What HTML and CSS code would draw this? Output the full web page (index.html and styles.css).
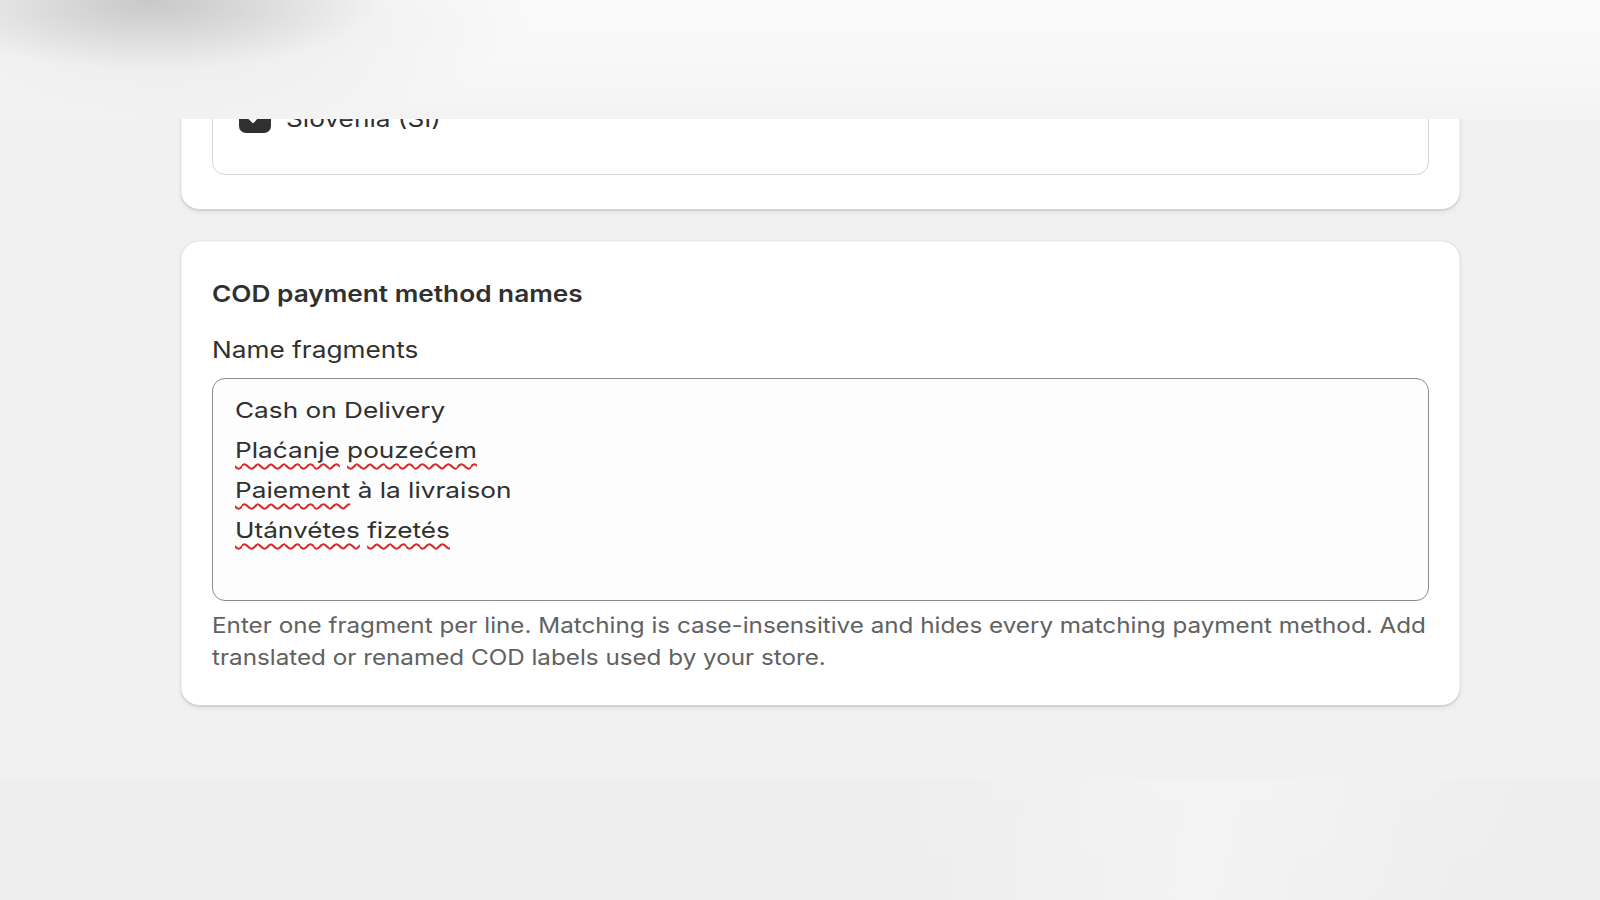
FILE: index.html
```html
<!DOCTYPE html>
<html lang="en">

<head>
    <meta charset="utf-8">
    <title>COD payment settings</title>

    <link rel="stylesheet" href="styles.css">

</head>

<body>
    <div class="topbar"></div>

    <main class="page">
        <section class="card card-countries">
            <div class="choice-list">
                <label class="choice">
                    <span class="checkbox"><svg viewBox="0 0 20 20"><path d="M5.5 10.5l3 3 6-7" /></svg></span>
                    <span class="wide">Slovakia (SK)</span>
                </label>
                <label class="choice">
                    <span class="checkbox"><svg viewBox="0 0 20 20"><path d="M5.5 10.5l3 3 6-7" /></svg></span>
                    <span class="wide">Slovenia (SI)</span>
                </label>
            </div>
        </section>

        <section class="card">
            <h2 class="card-title"><span class="wide">COD payment method names</span></h2>

            <div class="label"><span class="wide">Name fragments</span></div>
            <div class="textarea" role="textbox" aria-multiline="true">
                <div class="line">Cash on Delivery</div>
                <div class="line"><span class="typo">Plaćanje</span> <span class="typo">pouzećem</span></div>
                <div class="line"><span class="typo">Paiement</span> à la livraison</div>
                <div class="line"><span class="typo">Utánvétes</span> <span class="typo">fizetés</span></div>
            </div>

            <p class="help">Enter one fragment per line. Matching is case-insensitive and hides every matching payment method. Add translated or renamed COD labels used by your store.</p>
        </section>
    </main>

    <div class="bottombar"></div>
</body>

</html>
```

FILE: styles.css
```css
body {
    margin: 0;
    height: 900px;
    overflow: hidden;

    background: #f1f1f1;
    color: #303030;

    font-family: Inter, "Noto Sans", sans-serif;
    font-size: 22px;
}

/* blurred sticky header sitting over the scrolled page */
.topbar {
    position: fixed;
    top: 0;
    left: 0;
    right: 0;
    z-index: 2;

    height: 119px;

    background:
        radial-gradient(ellipse 230px 70px at 150px 0, rgba(160, 160, 160, 0.45), rgba(160, 160, 160, 0)),
        radial-gradient(ellipse 380px 120px at 160px 10px, rgba(200, 200, 200, 0.35), rgba(200, 200, 200, 0)),
        linear-gradient(#fafafa, #f8f8f8 50%, #f3f3f3);
}

.bottombar {
    position: fixed;
    left: 0;
    right: 0;
    bottom: 0;

    height: 121px;

    background:
        linear-gradient(100deg, rgba(255, 255, 255, 0) 55%, rgba(255, 255, 255, 0.35) 75%, rgba(255, 255, 255, 0) 95%),
        linear-gradient(#eeeeee, #ededed);
}

.page {
    display: flex;
    flex-direction: column;
    gap: 29px;

    width: 1281px;
    margin-left: 180px;
}

.card {
    padding: 38px 32px 34px;

    background: #fff;
    border-radius: 20px;
    box-shadow:
        0 2px 4px rgba(0, 0, 0, 0.06),
        inset 0 -2px 0 #d3d3d3,
        inset 1.5px 0 0 #e4e4e4,
        inset -1.5px 0 0 #e4e4e4,
        inset 0 1.5px 0 #e8e8e8;
}

.card-countries {
    padding-top: 32px;
    padding-bottom: 36px;
    border-radius: 0 0 20px 20px;
}

.wide {
    display: inline-block;
    transform: scaleX(1.14);
    transform-origin: left center;
}

.choice-list {
    display: flex;
    flex-direction: column;
    gap: 16px;

    padding: 20px 26px 41px;

    border: 1px solid #d6d6d6;
    border-radius: 13px;
}

.choice {
    display: flex;
    align-items: center;
    gap: 15px;

    height: 32px;

    font-size: 23px;
}

.choice .wide {
    position: relative;
    top: 2px;
}

.checkbox {
    display: flex;
    align-items: center;
    justify-content: center;

    width: 32px;
    height: 31px;

    background: #303030;
    border-radius: 7px;
}

.checkbox svg {
    width: 26px;
    height: 26px;

    fill: none;
    stroke: #fff;
    stroke-width: 2.2;
    stroke-linecap: round;
    stroke-linejoin: round;
}

.card-title {
    margin: 0;

    font-size: 23px;
    font-weight: 600;
    line-height: 32px;
}

.label {
    margin-top: 24px;

    font-size: 23px;
    line-height: 32px;
}

.textarea {
    box-sizing: border-box;
    height: 223px;
    margin-top: 12px;
    padding: 11px 22px;

    background: #fdfdfd;
    border: 1.5px solid #8c8c8c;
    border-radius: 13px;

    font-size: 22px;
    line-height: 40px;
}

.textarea .line {
    transform: scaleX(1.19);
    transform-origin: left center;
}

.typo {
    text-decoration: underline wavy #d72c2c;
    text-decoration-thickness: 1.7px;
    text-underline-offset: 5px;
}

.help {
    width: 1080px;
    margin: 8px 0 0;

    color: #616161;
    font-size: 21.5px;
    line-height: 32px;

    transform: scaleX(1.127);
    transform-origin: left top;
}
```
